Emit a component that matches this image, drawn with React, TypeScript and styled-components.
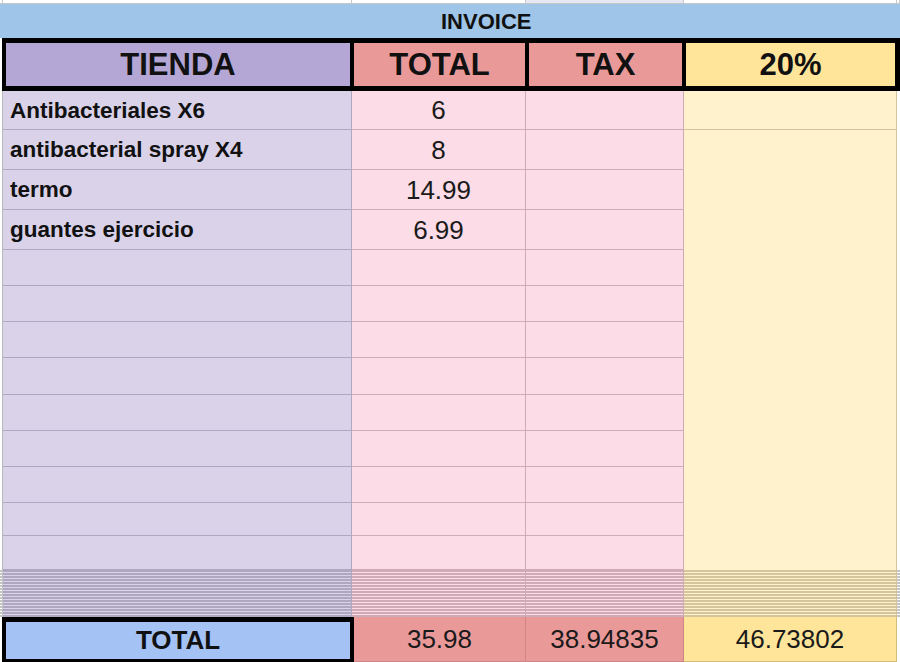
import React, { FC } from 'react';
import styled, { createGlobalStyle, css } from 'styled-components';

const GlobalStyle = createGlobalStyle`
  html, body {
    margin: 0;
    padding: 0;
    background: #ffffff;
  }

  body {
    font-family: 'Liberation Sans', Arial, sans-serif;
    color: #111111;
  }
`;

type Tone = 'purple' | 'pink' | 'yellow' | 'blank';

const tones: Record<Tone, { bg: string; line: string }> = {
  purple: { bg: '#d9d2e9', line: '#afa6c2' },
  pink: { bg: '#fcdce6', line: '#cfaab7' },
  yellow: { bg: '#fff2cc', line: '#d6c49c' },
  blank: { bg: '#ffffff', line: '#c4c4c4' },
};

const COLS = '3px 349px 174px 158px 213px 3px';

const Sheet = styled.div`
  width: 900px;
  height: 662px;
  overflow: hidden;
  display: flex;
  flex-direction: column;
`;

// top strip (row above the title)
const TopStrip = styled.div`
  display: grid;
  grid-template-columns: ${COLS};
  height: 4px;
  border-bottom: 1px solid #c6c6c6;
  box-sizing: border-box;
`;

const TopCell = styled.div<{ $tint?: boolean }>`
  background: ${(p) => (p.$tint ? '#e6e8f4' : '#ffffff')};
  border-right: 1px solid #c8c8c8;
`;

// title
const TitleBar = styled.div`
  height: 34px;
  background: #9fc5e8;
  display: flex;
  align-items: center;
  padding-left: 441px;
  padding-top: 2px;
  box-sizing: border-box;
  font-size: 22px;
  font-weight: 700;
`;

// header
const HeaderRow = styled.div`
  display: flex;
  height: 53px;
  margin-left: 2px;
  box-sizing: border-box;
  border: 5px solid #000000;
  border-left-width: 4px;
`;

const HeaderCell = styled.div<{ $tone: Tone; $width: number; $last?: boolean }>`
  width: ${(p) => p.$width}px;
  flex: none;
  box-sizing: border-box;
  background: ${(p) => ({ purple: '#b4a7d6', pink: '#ea9999', yellow: '#ffe599', blank: '#fff' })[p.$tone]};
  border-right: ${(p) => (p.$last ? 'none' : '4px solid #000000')};
  display: flex;
  align-items: center;
  justify-content: center;
  font-size: 31px;
  font-weight: 700;
`;

// body
const Body = styled.div`
  display: grid;
  grid-template-columns: ${COLS};
  grid-template-rows: 39px 40px 40px 40px 36px 36px 36px 37px 36px 36px 36px 33px 34px;
`;

const Gutter = styled.div<{ $side: 'left' | 'right' }>`
  grid-row: 1 / -1;
  grid-column: ${(p) => (p.$side === 'left' ? 1 : 6)};
  background: #ffffff;
  ${(p) =>
    p.$side === 'left' &&
    css`
      border-right: 1px solid #b8b8b8;
    `}
`;

const Cell = styled.div<{ $tone: Tone }>`
  box-sizing: border-box;
  background: ${(p) => tones[p.$tone].bg};
  border-right: 1px solid ${(p) => tones[p.$tone].line};
  border-bottom: 1px solid ${(p) => tones[p.$tone].line};
  display: flex;
  align-items: center;
  min-width: 0;
`;

const NameCell = styled(Cell)`
  padding-left: 7px;
  padding-top: 1px;
  font-size: 22.5px;
  font-weight: 700;
  white-space: nowrap;
`;

const NumberCell = styled(Cell)`
  justify-content: center;
  padding-top: 1px;
  font-size: 26px;
  color: #1a1a1a;
`;

const MergedCell = styled(Cell)`
  grid-column: 5;
  grid-row: 2 / -1;
  border-bottom: none;
`;

// collapsed rows
const Stripes = styled.div`
  display: grid;
  grid-template-columns: ${COLS};
  height: 47px;
`;

const StripeCell = styled.div<{ $tone: Tone; $edge?: boolean }>`
  box-sizing: border-box;
  background: repeating-linear-gradient(
    to bottom,
    ${(p) => tones[p.$tone].line} 0 1.6px,
    ${(p) => tones[p.$tone].bg} 1.6px 3px
  );
  border-right: ${(p) => (p.$edge ? 'none' : `1px solid ${tones[p.$tone].line}`)};
`;

// totals
const TotalRow = styled.div`
  display: grid;
  grid-template-columns: 2px 352px 172px 158px 213px 3px;
  height: 45px;
`;

const TotalLabel = styled.div`
  grid-column: 2;
  box-sizing: border-box;
  background: #a4c2f4;
  border: 4px solid #000000;
  border-top-width: 5px;
  border-bottom-width: 3px;
  display: flex;
  align-items: center;
  justify-content: center;
  font-size: 26px;
  font-weight: 700;
`;

const TotalCell = styled.div<{ $tone: 'pink' | 'yellow' }>`
  box-sizing: border-box;
  background: ${(p) => (p.$tone === 'pink' ? '#ea9999' : '#ffe599')};
  border-right: 1px solid ${(p) => (p.$tone === 'pink' ? '#cf8585' : '#d4bd78')};
  border-bottom: 1px solid ${(p) => (p.$tone === 'pink' ? '#cf8585' : '#d4bd78')};
  display: flex;
  align-items: center;
  justify-content: center;
  font-size: 26px;
  color: #1a1a1a;
`;

const Blank = styled.div`
  background: #ffffff;
`;

type Item = { name: string; total: string };

const items: Item[] = [
  { name: 'Antibacteriales X6', total: '6' },
  { name: 'antibacterial spray X4', total: '8' },
  { name: 'termo', total: '14.99' },
  { name: 'guantes ejercicio', total: '6.99' },
];

const ROW_COUNT = 13;

const App: FC = () => {
  const rows = Array.from({ length: ROW_COUNT }, (_, i) => items[i] ?? { name: '', total: '' });

  return (
    <>
      <GlobalStyle />
      <Sheet>
        <TopStrip>
          <TopCell />
          <TopCell />
          <TopCell />
          <TopCell $tint />
          <TopCell />
          <TopCell />
        </TopStrip>

        <TitleBar>INVOICE</TitleBar>

        <HeaderRow>
          <HeaderCell $tone="purple" $width={348}>TIENDA</HeaderCell>
          <HeaderCell $tone="pink" $width={175}>TOTAL</HeaderCell>
          <HeaderCell $tone="pink" $width={157}>TAX</HeaderCell>
          <HeaderCell $tone="yellow" $width={209} $last>20%</HeaderCell>
        </HeaderRow>

        <Body>
          <Gutter $side="left" />
          <Gutter $side="right" />
          {rows.map((row, i) => (
            <React.Fragment key={i}>
              <NameCell $tone="purple">{row.name}</NameCell>
              <NumberCell $tone="pink">{row.total}</NumberCell>
              <NumberCell $tone="pink" />
              {i === 0 && <NumberCell $tone="yellow" />}
            </React.Fragment>
          ))}
          <MergedCell $tone="yellow" />
        </Body>

        <Stripes>
          <StripeCell $tone="blank" />
          <StripeCell $tone="purple" />
          <StripeCell $tone="pink" />
          <StripeCell $tone="pink" />
          <StripeCell $tone="yellow" />
          <StripeCell $tone="blank" $edge />
        </Stripes>

        <TotalRow>
          <Blank />
          <TotalLabel>TOTAL</TotalLabel>
          <TotalCell $tone="pink">35.98</TotalCell>
          <TotalCell $tone="pink">38.94835</TotalCell>
          <TotalCell $tone="yellow">46.73802</TotalCell>
          <Blank />
        </TotalRow>
      </Sheet>
    </>
  );
};

export default App;
